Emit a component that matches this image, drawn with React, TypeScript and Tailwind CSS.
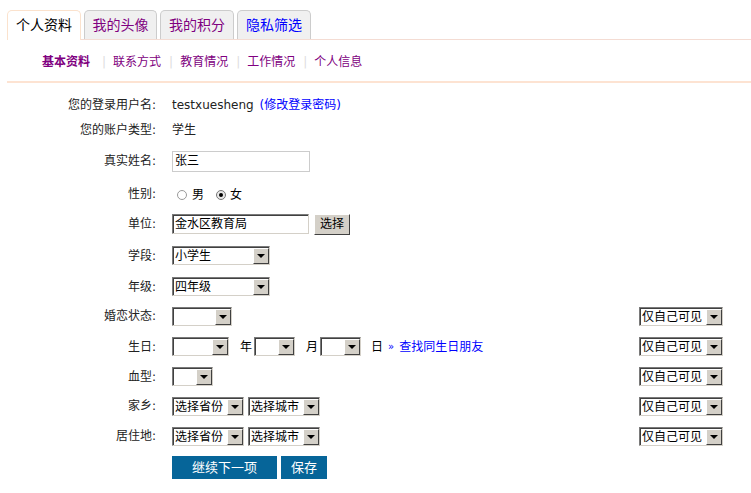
import React from 'react'

function Arrow() {
  return (
    <div className="w-[16px] h-full bg-[#d4d0c8] border border-t-white border-l-white border-b-[#404040] border-r-[#404040] flex items-center justify-center shrink-0">
      <div className="w-0 h-0 border-l-[4px] border-r-[4px] border-t-[4px] border-l-transparent border-r-transparent border-t-black" />
    </div>
  )
}

function Sel({ className, text }: { className: string; text?: string }) {
  return (
    <div
      className={`h-[19px] flex items-stretch bg-white border border-t-[#7a7a7a] border-l-[#7a7a7a] border-b-[#d4d0c8] border-r-[#d4d0c8] shadow-[inset_1px_1px_0_#404040] pl-[2px] pt-[1px] ${className}`}
    >
      <div className="flex-1 text-[12px] leading-[16px] text-black whitespace-nowrap overflow-hidden">{text}</div>
      <Arrow />
    </div>
  )
}

function Privacy() {
  return <Sel className="w-[84px]" text="仅自己可见" />
}

function Row({
  label,
  h,
  children,
  privacy,
}: {
  label: string
  h: string
  children?: React.ReactNode
  privacy?: boolean
}) {
  return (
    <div className={`flex items-center ${h}`}>
      <div className="w-[156px] text-right text-[#222] shrink-0">{label}:</div>
      <div className="ml-[16px] flex items-center flex-1">{children}</div>
      {privacy && <Privacy />}
    </div>
  )
}

const subnav = ['联系方式', '教育情况', '工作情况', '个人信息']

export default function App() {
  return (
    <div className="w-[751px] h-[493px] bg-white font-['DejaVu_Sans','Noto_Sans_CJK_SC',sans-serif] text-[12px] overflow-hidden">
      {/* Tabs */}
      <div className="pt-[10px] ml-[7px] flex items-end gap-[3px] border-b border-[#f4dcd3] h-[40px]">
        <div className="w-[74px] h-[30px] -mb-px bg-white border border-b-0 border-[#fbe2cd] rounded-t-[5px] flex items-center justify-center text-[14px] text-black">
          个人资料
        </div>
        <div className="w-[73px] h-[29px] bg-[#f0f0f0] border border-b-0 border-[#cccccc] rounded-t-[5px] flex items-center justify-center text-[14px] text-[#800080]">
          我的头像
        </div>
        <div className="w-[74px] h-[29px] bg-[#f0f0f0] border border-b-0 border-[#cccccc] rounded-t-[5px] flex items-center justify-center text-[14px] text-[#800080]">
          我的积分
        </div>
        <div className="w-[74px] h-[29px] bg-[#f0f0f0] border border-b-0 border-[#cccccc] rounded-t-[5px] flex items-center justify-center text-[14px] text-[#0000ff]">
          隐私筛选
        </div>
      </div>

      {/* Sub navigation */}
      <div className="ml-[7px] h-[43px] border-b-2 border-[#fde3d2] flex items-center pl-[35px] pt-[3px]">
        <span className="font-bold text-[#800080] mr-[4px]">基本资料</span>
        {subnav.map((s) => (
          <React.Fragment key={s}>
            <span className="text-[#dddddd] ml-[8px] mr-[7px]">|</span>
            <span className="text-[#800080]">{s}</span>
          </React.Fragment>
        ))}
      </div>

      {/* Form */}
      <div className="pt-[9px] pr-[28px]">
        <Row label="您的登录用户名" h="h-[25px]">
          <span className="text-[#222]">testxuesheng</span>
          <span className="ml-[6px] text-[#0000ff]">(修改登录密码)</span>
        </Row>
        <Row label="您的账户类型" h="h-[26px]">
          <span className="text-[#222]">学生</span>
        </Row>
        <Row label="真实姓名" h="h-[36px]">
          <div className="w-[138px] h-[21px] border border-[#cccccc] bg-white pl-[2px] flex items-center text-black">张三</div>
        </Row>
        <Row label="性别" h="h-[30px]">
          <div className="flex items-center pl-[5px] pt-[2px]">
            <div className="w-[10px] h-[10px] rounded-full border border-[#9a9a9a] bg-white" />
            <span className="ml-[5px] text-black">男</span>
            <div className="ml-[12px] w-[10px] h-[10px] rounded-full border border-[#777] bg-[#e8e8e8] flex items-center justify-center">
              <div className="w-[4px] h-[4px] rounded-full bg-black" />
            </div>
            <span className="ml-[4px] text-black">女</span>
          </div>
        </Row>
        <Row label="单位" h="h-[30px]">
          <div className="w-[137px] h-[20px] bg-white border border-t-[#7a7a7a] border-l-[#7a7a7a] border-b-[#d4d0c8] border-r-[#d4d0c8] shadow-[inset_1px_1px_0_#404040] pl-[2px] flex items-center text-black">
            金水区教育局
          </div>
          <div className="ml-[5px] w-[36px] h-[21px] bg-[#d4d0c8] border border-t-white border-l-white border-b-[#404040] border-r-[#404040] flex items-center justify-center text-black">
            选择
          </div>
        </Row>
        <Row label="学段" h="h-[33px]">
          <Sel className="w-[98px]" text="小学生" />
        </Row>
        <Row label="年级" h="h-[29px]">
          <Sel className="w-[98px]" text="四年级" />
        </Row>
        <Row label="婚恋状态" h="h-[30px]" privacy>
          <Sel className="w-[60px]" />
        </Row>
        <Row label="生日" h="h-[31px]" privacy>
          <Sel className="w-[57px]" />
          <span className="ml-[11px] text-black">年</span>
          <Sel className="ml-[2px] w-[41px]" />
          <span className="ml-[11px] text-black">月</span>
          <Sel className="ml-[2px] w-[41px]" />
          <span className="ml-[10px] text-black">日</span>
          <span className="ml-[5px] text-[#0000ff] text-[10px]">»</span>
          <span className="ml-[5px] text-[#0000ff]">查找同生日朋友</span>
        </Row>
        <Row label="血型" h="h-[29px]" privacy>
          <Sel className="w-[41px]" />
        </Row>
        <Row label="家乡" h="h-[30px]" privacy>
          <Sel className="w-[72px]" text="选择省份" />
          <Sel className="ml-[4px] w-[72px]" text="选择城市" />
        </Row>
        <Row label="居住地" h="h-[30px]" privacy>
          <Sel className="w-[72px]" text="选择省份" />
          <Sel className="ml-[4px] w-[72px]" text="选择城市" />
        </Row>
        <div className="flex items-center mt-[5px] pl-[172px] gap-[4px]">
          <div className="w-[105px] h-[23px] bg-[#066599] text-white text-[13px] flex items-center justify-center">继续下一项</div>
          <div className="w-[46px] h-[23px] bg-[#066599] text-white text-[13px] flex items-center justify-center">保存</div>
        </div>
      </div>
    </div>
  )
}
